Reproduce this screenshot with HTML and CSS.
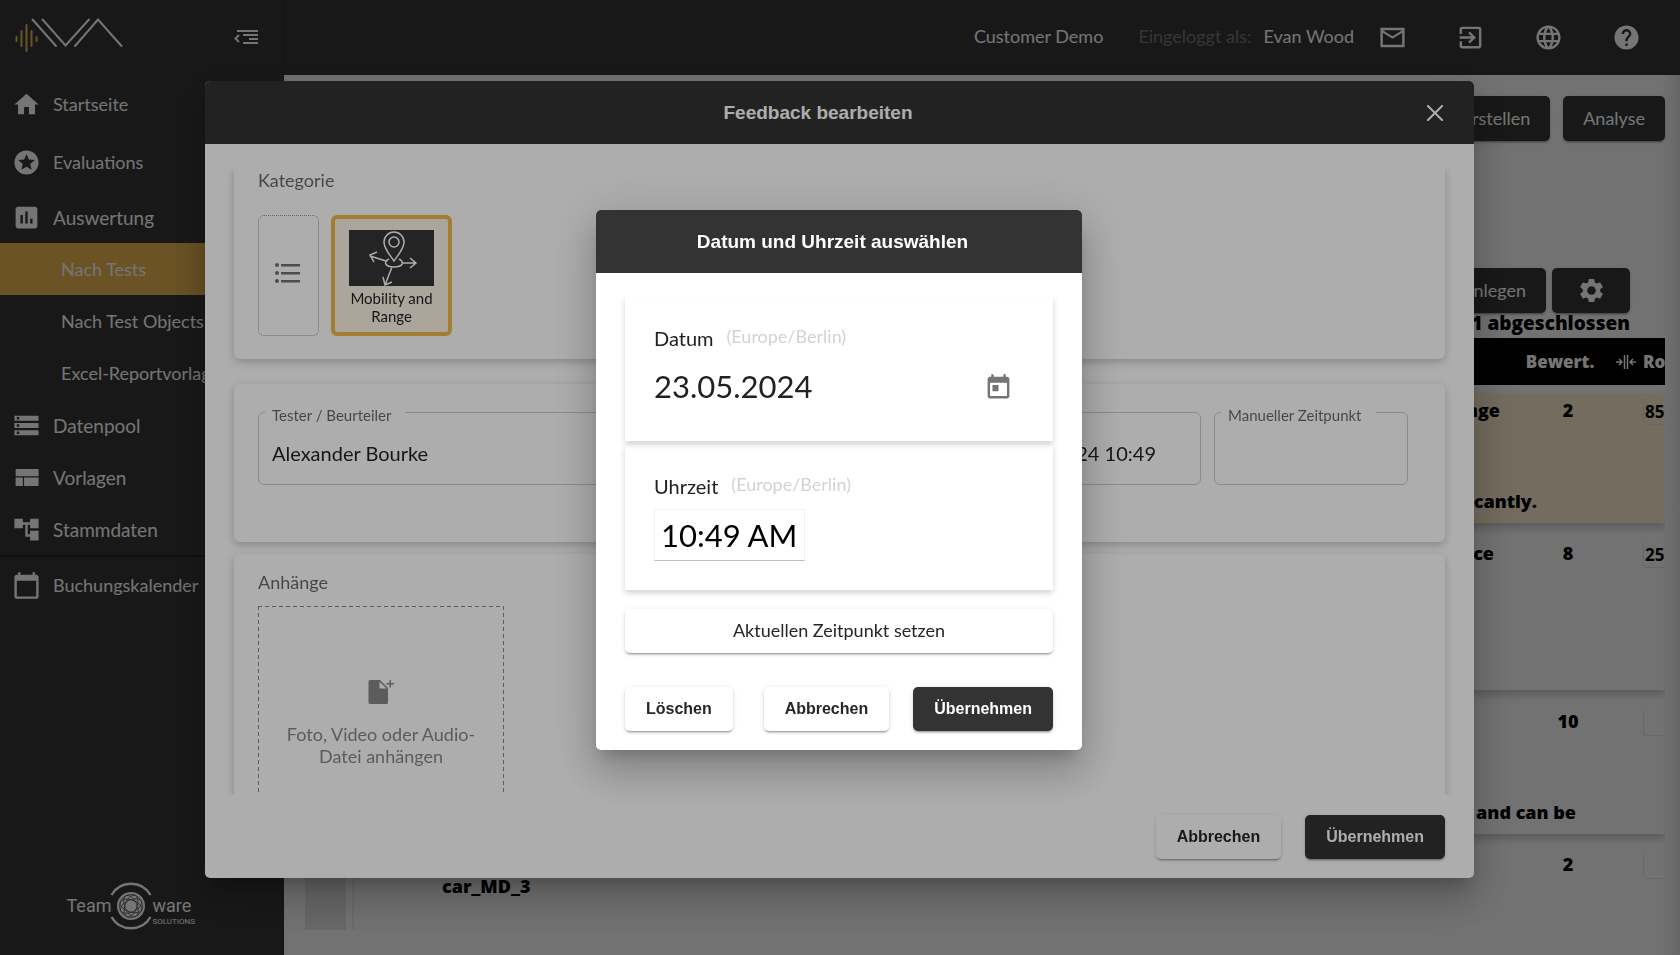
FILE: index.html
```html
<!DOCTYPE html>
<html lang="de">
<head>
<meta charset="utf-8">
<meta name="viewport" content="width=device-width, initial-scale=1">
<title>Feedback bearbeiten</title>
<link rel="stylesheet" href="styles.css">
</head>
<body>
<div class="app">
  <aside class="sidebar">
    <div class="brand">
      <svg class="brand-logo" viewBox="0 0 110 38" width="110" height="38" fill="none" stroke-width="2" stroke-linecap="round" aria-label="NVA">
        <path stroke="#e9b651" d="M2.500 22v4M7.500 16v15M12.500 10v26M17.500 16v15M22.500 22v4"/>
        <path stroke="#fff" d="M18.500 4.500 42 31M28.500 4.500 51.500 30.500 75 4.500M61 31 84 4.500 107.500 31"/>
      </svg>
      <button class="icon-button collapse" aria-label="Menü einklappen">
        <svg viewBox="0 0 24 16" width="24" height="16" fill="none" stroke="currentColor" stroke-width="2"><path d="M3 2h21M9 6h15M15 10h9M9 14h15M5 6 1.500 9.500 5 13"/></svg>
      </button>
    </div>
    <nav class="nav">
      <a class="nav-item tall" href="#"><svg viewBox="0 0 24 24"><path d="M10 20v-6h4v6h5v-8h3L12 3 2 12h3v8z"/></svg>Startseite</a>
      <a class="nav-item tall" href="#"><svg viewBox="0 0 24 24"><path d="M11.990 2C6.470 2 2 6.480 2 12s4.470 10 9.990 10C17.520 22 22 17.520 22 12S17.520 2 11.990 2zm4.240 16L12 15.450 7.770 18l1.120-4.810-3.730-3.230 4.920-.42L12 5l1.920 4.530 4.920.42-3.730 3.230L16.230 18z"/></svg>Evaluations</a>
      <a class="nav-item large" href="#"><svg viewBox="0 0 24 24"><path d="M19 3H5c-1.100 0-2 .9-2 2v14c0 1.100.9 2 2 2h14c1.100 0 2-.9 2-2V5c0-1.100-.9-2-2-2zM9 17H7v-7h2v7zm4 0h-2V7h2v10zm4 0h-2v-4h2v4z"/></svg>Auswertung</a>
      <a class="nav-item sub active" href="#">Nach Tests</a>
      <a class="nav-item sub" href="#">Nach Test Objects</a>
      <a class="nav-item sub" href="#">Excel-Reportvorlagen</a>
      <a class="nav-item large" href="#"><svg viewBox="0 0 24 24"><path d="M2 20h20v-4H2v4zm2-3h2v2H4v-2zM2 4v4h20V4H2zm4 3H4V5h2v2zm-4 7h20v-4H2v4zm2-3h2v2H4v-2z"/></svg>Datenpool</a>
      <a class="nav-item large" href="#"><svg viewBox="0 0 24 24"><path d="M3 19h6v-7H3v7zm7 0h12v-7H10v7zM3 5v6h19V5H3z"/></svg>Vorlagen</a>
      <a class="nav-item large" href="#"><svg viewBox="0 0 24 24"><path d="M22 11V3h-7v3H9V3H2v8h7V8h2v10h4v3h7v-8h-7v3h-2V8h2v3z"/></svg>Stammdaten</a>
      <a class="nav-item tall divided" href="#"><svg viewBox="0 0 24 24"><path d="M20 3h-1V1h-2v2H7V1H5v2H4c-1.100 0-2 .9-2 2v16c0 1.100.9 2 2 2h16c1.100 0 2-.9 2-2V5c0-1.100-.9-2-2-2zm0 18H4V8h16v13z"/></svg>Buchungskalender</a>
    </nav>
    <div class="vendor">
      <span class="vendor-team">Team</span>
      <svg viewBox="0 0 44 50" width="44" height="50" fill="none" stroke="#fff" aria-hidden="true">
        <path stroke-width="2.500" d="M2.500 14A22.500 22.500 0 0 1 41.500 14M2.500 36A22.500 22.500 0 0 0 41.500 36"/>
        <circle cx="22" cy="25" r="14" fill="#fff" stroke="none"/>
        <g stroke="#555" stroke-width=".8"><circle cx="22" cy="25" r="11.500"/><ellipse cx="22" cy="25" rx="11.500" ry="6" transform="rotate(20 22 25)"/><ellipse cx="22" cy="25" rx="11.500" ry="6" transform="rotate(65 22 25)"/><ellipse cx="22" cy="25" rx="11.500" ry="6" transform="rotate(110 22 25)"/><ellipse cx="22" cy="25" rx="11.500" ry="6" transform="rotate(155 22 25)"/></g>
      </svg>
      <span class="vendor-ware">ware<small>SOLUTIONS</small></span>
    </div>
  </aside>
  <div class="main">
    <header class="topbar">
      <span class="customer">Customer Demo</span>
      <span class="login-label">Eingeloggt als:</span>
      <span class="user">Evan Wood</span>
      <div class="top-icons">
        <button class="icon-button" aria-label="Nachrichten"><svg viewBox="0 0 24 24"><path d="M22 4H2v16h20V4zm-2 14H4V8l8 5 8-5v10zm-8-7L4 6h16l-8 5z"/></svg></button>
        <button class="icon-button" aria-label="Abmelden"><svg viewBox="0 0 24 24"><path d="M10.090 15.590 11.500 17l5-5-5-5-1.410 1.410L12.670 11H3v2h9.670l-2.580 2.590zM19 3H5c-1.110 0-2 .9-2 2v4h2V5h14v14H5v-4H3v4c0 1.100.89 2 2 2h14c1.100 0 2-.9 2-2V5c0-1.100-.9-2-2-2z"/></svg></button>
        <button class="icon-button" aria-label="Sprache"><svg viewBox="0 0 24 24"><path d="M11.990 2C6.470 2 2 6.480 2 12s4.470 10 9.990 10C17.520 22 22 17.520 22 12S17.520 2 11.990 2zm6.930 6h-2.950c-.32-1.250-.78-2.450-1.380-3.560 1.840.63 3.370 1.910 4.330 3.560zM12 4.040c.83 1.200 1.480 2.530 1.910 3.960h-3.820c.43-1.430 1.080-2.760 1.910-3.960zM4.260 14C4.100 13.360 4 12.690 4 12s.1-1.360.26-2h3.380c-.08.66-.14 1.320-.14 2s.06 1.340.14 2H4.260zm.82 2h2.950c.32 1.250.78 2.450 1.380 3.560-1.840-.63-3.370-1.900-4.330-3.560zm2.950-8H5.080c.96-1.660 2.490-2.930 4.330-3.560C8.810 5.550 8.350 6.750 8.030 8zM12 19.960c-.83-1.200-1.480-2.530-1.910-3.960h3.820c-.43 1.430-1.080 2.760-1.910 3.960zM14.340 14H9.660c-.09-.66-.16-1.320-.16-2s.07-1.350.16-2h4.680c.09.65.16 1.320.16 2s-.07 1.340-.16 2zm.25 5.560c.6-1.110 1.060-2.310 1.380-3.560h2.950c-.96 1.650-2.490 2.930-4.330 3.560zM16.360 14c.08-.66.14-1.320.14-2s-.06-1.340-.14-2h3.380c.16.64.26 1.310.26 2s-.1 1.360-.26 2h-3.380z"/></svg></button>
        <button class="icon-button" aria-label="Hilfe"><svg viewBox="0 0 24 24"><path d="M12 2C6.480 2 2 6.480 2 12s4.480 10 10 10 10-4.480 10-10S17.520 2 12 2zm1 17h-2v-2h2v2zm2.070-7.750-.9.920C13.450 12.900 13 13.500 13 15h-2v-.5c0-1.100.45-2.100 1.170-2.830l1.240-1.260c.37-.36.59-.86.59-1.410 0-1.100-.9-2-2-2s-2 .9-2 2H8c0-2.210 1.790-4 4-4s4 1.790 4 4c0 .88-.36 1.680-.93 2.250z"/></svg></button>
      </div>
    </header>
    <main class="content">
      <div class="actions">
        <button class="btn btn-page">Bericht erstellen</button>
        <button class="btn btn-page">Analyse</button>
      </div>
      <div class="actions table-actions">
        <button class="btn btn-page">Anlegen</button>
        <button class="btn btn-page btn-gear" aria-label="Einstellungen"><svg viewBox="0 0 24 24"><path d="M19.140 12.940c.04-.3.060-.61.060-.94 0-.32-.02-.64-.07-.94l2.030-1.580c.18-.14.23-.41.12-.61l-1.920-3.320c-.12-.22-.37-.29-.59-.22l-2.390.96c-.5-.38-1.030-.7-1.620-.94l-.36-2.540c-.04-.24-.24-.41-.48-.41h-3.840c-.24 0-.43.17-.47.41l-.36 2.540c-.59.24-1.130.57-1.620.94l-2.390-.96c-.22-.08-.47 0-.59.22L2.740 8.870c-.12.210-.08.470.12.610l2.030 1.580c-.05.3-.09.630-.09.940s.02.640.07.940l-2.030 1.580c-.18.14-.23.410-.12.610l1.920 3.320c.12.220.37.290.59.220l2.390-.96c.5.38 1.030.7 1.620.940l.36 2.540c.05.240.24.410.48.410h3.840c.24 0 .44-.17.47-.41l.36-2.540c.59-.24 1.130-.56 1.620-.94l2.390.96c.22.080.47 0 .59-.22l1.920-3.320c.12-.22.070-.47-.12-.61l-2.010-1.580zM12 15.600c-1.980 0-3.600-1.620-3.600-3.600s1.620-3.600 3.600-3.600 3.600 1.620 3.600 3.600-1.620 3.600-3.600 3.600z"/></svg></button>
      </div>
      <p class="progress">1 abgeschlossen</p>
      <div class="results">
        <div class="result-head"><span></span><span class="rating">Bewert.</span><span class="raw"><svg viewBox="0 0 20 16" width="20" height="16" fill="none" stroke="currentColor" stroke-width="1.500"><path d="M0 8h5M3 5l3 3-3 3M8.500 1v14M11.500 1v14M20 8h-5M17 5l-3 3 3 3"/></svg>Ro</span></div>
        <div class="result selected"><div class="desc"><span>Range</span><span class="note">significantly.</span></div><span class="rating">2</span><input class="raw-input" aria-label="Rohwert 1" value="85"></div>
        <div class="result second"><div class="desc distance"><span>Distance</span></div><span class="rating">8</span><input class="raw-input" aria-label="Rohwert 2" value="25"></div>
        <div class="result"><div class="desc"><span></span><span class="note end">and can be</span></div><span class="rating">10</span><input class="raw-input" aria-label="Rohwert 3"></div>
        <div class="result last"><div class="desc split"><span class="thumb"></span><span class="car">car_MD_3</span></div><span class="rating">2</span><input class="raw-input" aria-label="Rohwert 4"></div>
      </div>
    </main>
  </div>
</div>

<div class="overlay overlay-feedback">
  <section class="dialog feedback" role="dialog" aria-labelledby="feedback-title">
    <header class="dialog-head"><h2 id="feedback-title">Feedback bearbeiten</h2>
      <button class="close" aria-label="Schließen"><svg viewBox="0 0 16 16" width="16" height="16" fill="none" stroke="currentColor" stroke-width="2"><path d="M0 0 16 16M16 0 0 16"/></svg></button>
    </header>
    <div class="scroll">
      <div class="card category">
        <h3>Kategorie</h3>
        <div class="tiles">
          <button class="tile tile-list" aria-label="Liste"><svg viewBox="0 0 25 20" width="25" height="20" fill="currentColor"><circle cx="2" cy="2" r="2"/><circle cx="2" cy="10" r="2"/><circle cx="2" cy="18" r="2"/><path d="M6 1h19v2.500H6zM6 9h19v2.500H6zM6 17h19v2.500H6z"/></svg></button>
          <button class="tile tile-selected">
            <svg viewBox="0 0 85 56" width="85" height="56" fill="none" stroke="#fff" stroke-width="1.500"><path fill="#363636" stroke="none" d="M0 0h85v56H0z"/><path d="M45 31C41 25 35 19 35 12a10 10 0 0 1 20 0c0 7-6 13-10 19z"/><circle cx="45" cy="12" r="5"/><path d="M40 29c-6 3-4 8 5 8s11-5 5-8M37 31 21 26M28 22l-7 3 4 7M53 33h14M61 28l6 5-6 5M43 37l-7 18M34 47l2 8 7-3"/></svg>
            Mobility and Range
          </button>
        </div>
      </div>
      <div class="card fields">
        <fieldset class="field grow"><legend><label for="tester">Tester / Beurteiler</label></legend><input id="tester" value="Alexander Bourke"></fieldset>
        <fieldset class="field date"><legend><label for="stamp">Zeitpunkt</label></legend><input id="stamp" value="23.05.2024 10:49"></fieldset>
        <fieldset class="field manual"><legend><label for="manual">Manueller Zeitpunkt</label></legend><input id="manual"></fieldset>
      </div>
      <div class="card attachments">
        <h3>Anhänge</h3>
        <button class="dropzone">
          <svg viewBox="0 0 26 26" width="26" height="26" fill="currentColor"><path d="M2 1h10l8 8v14.500a1.500 1.500 0 0 1-1.500 1.500H2A1.500 1.500 0 0 1 .5 23.500v-21A1.500 1.500 0 0 1 2 1zm9.500 1.800v6.700h7zM21.500 1H23v3h3v1.500h-3v3h-1.500v-3h-3V4h3z"/></svg>
          <span>Foto, Video oder Audio-Datei anhängen</span>
        </button>
      </div>
    </div>
    <footer class="dialog-foot"><button class="btn btn-light">Abbrechen</button><button class="btn btn-dark">Übernehmen</button></footer>
  </section>
</div>

<div class="overlay overlay-picker">
  <section class="dialog picker" role="dialog" aria-labelledby="picker-title">
    <header class="dialog-head"><h2 id="picker-title">Datum und Uhrzeit auswählen</h2></header>
    <div class="picker-body">
      <div class="panels">
        <div class="panel">
          <label for="date">Datum <span class="zone">(Europe/Berlin)</span></label>
          <div class="date-row"><input id="date" class="date-input" value="23.05.2024"><button class="icon-button calendar" aria-label="Kalender öffnen"><svg viewBox="0 0 24 24"><path d="M19 3h-1V1h-2v2H8V1H6v2H5c-1.110 0-1.990.9-1.990 2L3 19c0 1.100.89 2 2 2h14c1.100 0 2-.9 2-2V5c0-1.100-.9-2-2-2zm0 16H5V8h14v11zM7 10h5v5H7z"/></svg></button></div>
        </div>
        <div class="panel panel-time">
          <label for="time">Uhrzeit <span class="zone">(Europe/Berlin)</span></label>
          <input id="time" class="time-input" value="10:49 AM">
        </div>
      </div>
      <button class="btn btn-light btn-now">Aktuellen Zeitpunkt setzen</button>
      <footer class="picker-foot"><button class="btn btn-light">Löschen</button><span class="spacer"></span><button class="btn btn-light">Abbrechen</button><button class="btn btn-dark">Übernehmen</button></footer>
    </div>
  </section>
</div>
</body>
</html>
```

FILE: styles.css
```css
* { box-sizing: border-box; }
body { margin: 0; font-family: Lato, "Open Sans", sans-serif; font-size: 18px; color: #000; overflow: hidden; }
button, input { font: inherit; color: inherit; }
button { border: 0; background: none; padding: 0; }
input { min-width: 0; border: 0; padding: 0; background: none; }
h2, h3, p { margin: 0; font-weight: 400; }
svg { display: block; flex: none; }
a { color: inherit; text-decoration: none; }

.app { display: flex; height: 100vh; overflow: hidden; }
.sidebar { flex: none; width: 284px; display: flex; flex-direction: column; background: #363636; color: #fff; border-right: 1px solid #303030; }
.brand { display: flex; justify-content: space-between; align-items: flex-start; height: 75px; padding: 15px 25px 0 14px; }
.icon-button svg { width: 29px; height: 29px; fill: currentColor; }
.icon-button.collapse { padding-top: 14px; }
.collapse svg { width: 24px; height: 16px; fill: none; }
.nav-item { display: flex; align-items: center; gap: 12px; height: 52px; padding: 0 12px; white-space: nowrap; }
.nav-item svg { width: 29px; height: 29px; fill: currentColor; }
.nav-item.tall { height: 58px; }
.nav-item.large { font-size: 19px; }
.nav-item.sub { padding-left: 61px; }
.nav-item.active { background: #e9b651; }
.nav-item.divided { border-top: 2px solid #252525; }
.vendor { display: flex; align-items: center; justify-content: center; margin-top: auto; padding: 0 22px 24px 0; font-family: Roboto, sans-serif; font-size: 18px; line-height: 20px; }
.vendor-team { width: 42px; }
.vendor-ware { width: 42px; padding-top: 12px; }
.vendor small { display: block; font-size: 8px; line-height: 12px; }

.main { flex: 1; min-width: 0; display: flex; flex-direction: column; background: #fafafa; }
.topbar { flex: none; display: flex; align-items: center; justify-content: flex-end; height: 75px; padding-right: 39px; background: #363636; color: #fff; }
.customer, .login-label, .user { padding-bottom: 3px; }
.login-label { margin-left: 35px; color: #777; }
.user { margin-left: 12px; }
.top-icons { display: flex; gap: 49px; margin-left: 24px; }
.content { flex: 1; min-height: 0; overflow: hidden; padding: 21px 15px 0 21px; background: linear-gradient(to left, #dedede, #fafafa 20px); }
.actions { display: flex; justify-content: flex-end; gap: 13px; }
.table-actions { gap: 6px; padding: 127px 35px 0 0; }
.btn { display: inline-flex; align-items: center; justify-content: center; height: 44px; padding: 0 20px 1px; border-radius: 5px; white-space: nowrap; box-shadow: 0 3px 1px -2px rgba(0,0,0,.2), 0 2px 2px rgba(0,0,0,.14), 0 1px 5px rgba(0,0,0,.12); }
.btn-page { height: 45px; background: #363636; color: #fff; }
.btn-gear { width: 78px; padding: 0; }
.btn-gear svg { width: 29px; height: 29px; fill: currentColor; }
.progress, .results { font-family: "Open Sans", Lato, sans-serif; font-size: 18px; font-weight: 800; }
.progress { padding-right: 35px; margin-bottom: 5px; text-align: right; font-size: 19px; line-height: 20px; }
.results { overflow: hidden; }
.result-head, .result { display: grid; grid-template-columns: minmax(0, 1fr) 120px 37px; }
.result-head { height: 47px; align-items: center; margin-bottom: 8px; overflow: hidden; background: #000; color: #fff; font-size: 17px; }
.rating { text-align: center; }
.result-head .rating { padding-right: 16px; }
.raw { display: flex; align-items: center; gap: 7px; margin-left: -12px; }
.result { height: 130px; padding-top: 6px; margin-bottom: 13px; line-height: 22px; box-shadow: 0 5px 8px rgba(0,0,0,.2); }
.result.selected { background: #fdeccf; margin-bottom: 9px; }
.result.second { height: 158px; margin-bottom: 14px; padding-top: 10px; }
.result.last { height: 83px; box-shadow: none; }
.desc { display: flex; flex-direction: column; justify-content: space-between; padding: 0 8px 11px 0; text-align: right; }
.desc.distance { padding-right: 14px; }
.note { margin-right: -37px; }
.note.end { margin-right: -76px; }
.desc.split { flex-direction: row; justify-content: flex-start; align-items: flex-end; gap: 90px; padding: 0; }
.thumb { align-self: stretch; width: 47px; background: #e4e4e4; border-right: 6px solid #fafafa; box-shadow: 2px 0 0 #ececec; }
.car { padding-bottom: 33px; }
.raw-input { width: 70px; height: 26px; margin-left: 15px; padding-left: 1px; border: 1px solid #e0e0e0; border-top: 0; border-radius: 4px; font-size: 17px; font-weight: 700; }

.overlay { position: fixed; inset: 0; display: flex; background: rgba(0,0,0,.32); }
.overlay-feedback { padding: 81px 206px 77px 205px; }
.overlay-picker { align-items: center; justify-content: center; padding: 4px 2px 0 0; }
.dialog { display: flex; flex-direction: column; overflow: hidden; border-radius: 5px; background: #fff; box-shadow: 0 11px 15px -7px rgba(0,0,0,.2), 0 24px 38px 3px rgba(0,0,0,.14), 0 9px 46px 8px rgba(0,0,0,.12); }
.feedback { flex: 1; min-width: 0; }
.dialog-head { flex: none; display: flex; align-items: center; height: 63px; padding: 1px 31px 0; background: #333; color: #fff; font-family: "Liberation Sans", Arial, sans-serif; }
.dialog-head h2 { flex: 1; padding-right: 13px; font-size: 19px; font-weight: 700; text-align: center; }
.feedback h2 { padding-right: 27px; }
.scroll { flex: 1; min-height: 0; overflow: hidden; margin: 24px 22px 0; padding: 0 7px; color: rgba(0,0,0,.87); }
.card { padding: 0 24px; border-radius: 6px; box-shadow: 0 3px 8px rgba(0,0,0,.22); }
.card h3 { font-size: 18px; line-height: 24px; color: rgba(0,0,0,.6); }
.category { height: 191px; margin-bottom: 25px; border-radius: 0 0 6px 6px; }
.tiles { display: flex; gap: 12px; padding-top: 23px; }
.tile { height: 121px; border-radius: 6px; }
.tile-list { display: grid; place-items: center; width: 61px; padding: 0 2px 5px 0; border: 1px dotted #999; color: #707070; }
.tile-selected { display: flex; flex-direction: column; align-items: center; gap: 3px; width: 121px; padding: 11px 14px 0; border: 4px solid #efba4c; background: #fdf4e5; font-size: 15px; line-height: 18px; }
.fields { display: flex; gap: 13px; height: 158px; padding: 16px 37px 0 24px; margin-bottom: 12px; }
.field { min-width: 0; height: 85px; margin: 0; padding: 0 13px; border: 1px solid #ccc; border-radius: 6px; }
.field.grow { flex: 1; }
.field.date { width: 330px; }
.field.date input { text-align: right; padding-right: 31px; }
.field.manual { width: 194px; }
.field legend { margin-left: -7px; padding: 6px 14px 0 7px; font-size: 15px; line-height: 18px; color: rgba(0,0,0,.6); }
.field input { display: block; width: 100%; height: 58px; font-size: 20px; }
.attachments { padding-top: 16px; height: 400px; }
.attachments h3 { margin-bottom: 12px; }
.dropzone {
  --dash-x: repeating-linear-gradient(90deg, #888 0 4px, transparent 4px 7px);
  --dash-y: repeating-linear-gradient(#888 0 4px, transparent 4px 7px);
  display: flex; flex-direction: column; align-items: center; gap: 18px; width: 246px; height: 246px; padding: 73px 20px 0;
  background: var(--dash-x) top / 100% 1px no-repeat, var(--dash-x) bottom / 100% 1px no-repeat, var(--dash-y) left / 1px 100% no-repeat, var(--dash-y) right / 1px 100% no-repeat;
  color: #888; line-height: 22px;
}
.dialog-foot { flex: none; display: flex; justify-content: flex-end; gap: 24px; padding: 20px 29px 19px; }
.dialog-foot .btn, .picker-foot .btn { padding: 0 21px; font-family: "Liberation Sans", Arial, sans-serif; font-size: 16px; font-weight: 700; }
.btn-light { background: #fff; color: #262626; }
.btn-dark { background: #333; color: #fff; }

.picker { width: 486px; }
.picker-body { padding: 24px 29px 19px; }
.panels { clip-path: inset(0 -10px -10px -10px); }
.panel { padding: 26px 29px 0; height: 144px; box-shadow: 0 3px 6px rgba(0,0,0,.18); color: #212121; }
.panel-time { height: 145px; margin-top: 4px; }
.panel label { display: flex; align-items: center; gap: 13px; font-size: 20px; line-height: 26px; }
.zone { font-size: 18px; color: #d3d3d3; padding-bottom: 4px; }
.date-row { display: flex; justify-content: space-between; align-items: center; height: 66px; padding-right: 11px; color: #757575; }
.calendar { padding-top: 4px; }
.date-input { width: 240px; font-size: 31px; color: #212121; }
.time-input { display: block; width: 151px; height: 52px; margin-top: 8px; padding: 0 6px; border: 1px solid #f2f2f2; border-bottom-color: #c0c0c0; font-size: 31px; color: #000; }
.btn-now { width: 100%; margin: 19px 0 34px; }
.picker-foot { display: flex; gap: 24px; }
.spacer { flex: 1; margin-right: -24px; }
```
